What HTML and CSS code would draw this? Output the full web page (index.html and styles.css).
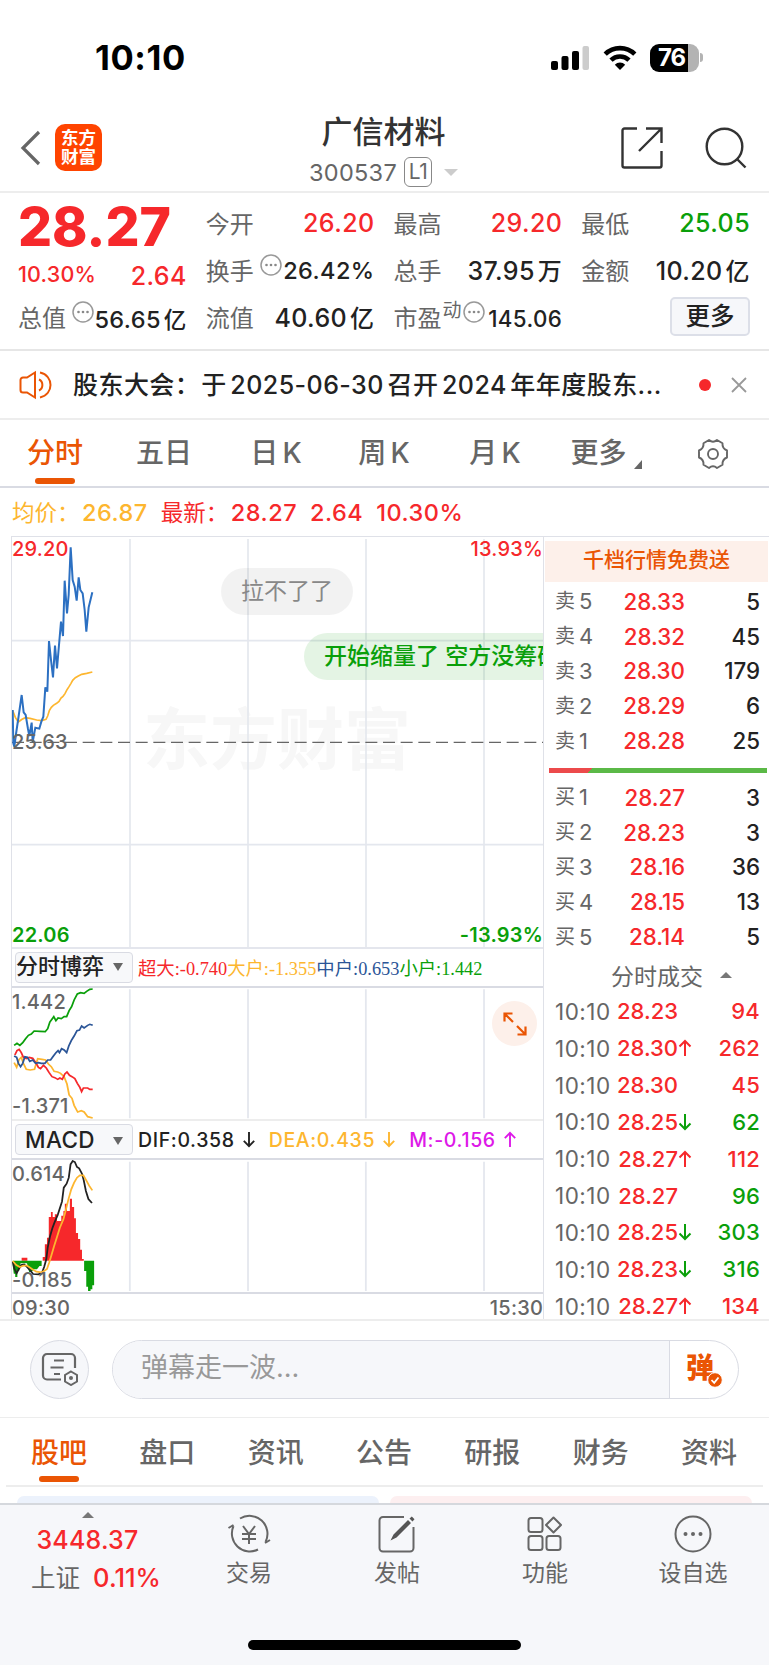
FILE: index.html
```html
<!DOCTYPE html>
<html lang="zh-CN">
<head>
    <meta charset="UTF-8">
    <meta name="viewport" content="width=device-width, initial-scale=1.0">
    <title>广信材料 300537</title>
    <link rel="stylesheet" href="styles.css">
</head>
<body>
    <svg class="defs" width="0" height="0">
        <symbol id="up" viewBox="0 0 14 18"><path d="M7 17V2M1.5 7.5L7 2l5.500 5.500" fill="none" stroke="currentColor" stroke-width="2"/></symbol>
        <symbol id="down" viewBox="0 0 14 18"><path d="M7 1v15M1.500 10.500L7 16l5.500-5.500" fill="none" stroke="currentColor" stroke-width="2"/></symbol>
        <symbol id="more" viewBox="0 0 22 22"><circle cx="11" cy="11" r="10" fill="none" stroke="#999" stroke-width="1.500"/><g fill="#888"><circle cx="6.500" cy="11" r="1.300"/><circle cx="11" cy="11" r="1.300"/><circle cx="15.500" cy="11" r="1.300"/></g></symbol>
    </svg>

    <div class="status">
        <span class="clock">10:10</span>
        <div class="status-icons">
            <svg width="40" height="26" viewBox="0 0 40 26">
                <rect x="1" y="16" width="7" height="9" rx="2"/>
                <rect x="11.500" y="11" width="7" height="14" rx="2"/>
                <rect x="22" y="6" width="7" height="19" rx="2"/>
                <rect x="32.500" y="1" width="6.500" height="24" rx="2" fill="#ccc"/>
            </svg>
            <svg width="34" height="26" viewBox="0 0 34 26">
                <g fill="none" stroke="#000" stroke-width="4.600">
                    <path d="M2.200 9.200a21 21 0 0 1 29.600 0"/>
                    <path d="M8 15.200a12.800 12.800 0 0 1 18 0"/>
                </g>
                <path d="M17 25l-5.200-5.300a7.500 7.500 0 0 1 10.400 0z"/>
            </svg>
            <div class="battery"><span>76</span></div>
        </div>
    </div>

    <div class="nav">
        <svg class="back" width="22" height="36" viewBox="0 0 22 36"><path d="M19 2L3 18l16 16" fill="none" stroke="#666" stroke-width="3.200"/></svg>
        <div class="logo">东方<br>财富</div>
        <div class="nav-title">
            <h1>广信材料</h1>
            <div class="code">300537<span class="level">L1</span><i class="tri-down light"></i></div>
        </div>
        <svg class="share" width="44" height="44" viewBox="0 0 44 44"><path d="M17 2.500H4.500a2 2 0 0 0-2 2v35a2 2 0 0 0 2 2h35a2 2 0 0 0 2-2V25M26 2.500h15.500V17M41 3L19 25" fill="none" stroke="#333" stroke-width="2.400"/></svg>
        <svg class="search" width="44" height="44" viewBox="0 0 44 44"><g fill="none" stroke="#333" stroke-width="2.400"><circle cx="20.500" cy="20.500" r="17.800"/><path d="M33 33l8.500 8.500"/></g></svg>
    </div>

    <div class="quote">
        <div class="cell price red">28.27</div>
        <div class="cell"><span>今开</span><b class="red">26.20</b></div>
        <div class="cell"><span>最高</span><b class="red">29.20</b></div>
        <div class="cell"><span>最低</span><b class="green">25.05</b></div>

        <div class="cell change red"><b class="pct">10.30%</b><b>2.64</b></div>
        <div class="cell"><span>换手</span><svg class="tip"><use href="#more"/></svg><b class="mid">26.42%</b></div>
        <div class="cell"><span>总手</span><b>37.95<em>万</em></b></div>
        <div class="cell"><span>金额</span><b>10.20<em>亿</em></b></div>

        <div class="cell"><span>总值</span><svg class="tip"><use href="#more"/></svg><b class="mid">56.65<em>亿</em></b></div>
        <div class="cell"><span>流值</span><b>40.60<em>亿</em></b></div>
        <div class="cell"><span>市盈</span><small>动</small><svg class="tip"><use href="#more"/></svg><b class="small">145.06</b></div>
        <div class="cell"><button class="more-btn">更多</button></div>
    </div>

    <div class="notice">
        <svg width="34" height="30" viewBox="0 0 34 30"><g fill="none" stroke="#ea5504" stroke-width="2"><path d="M16 2.500v25L8 22.500H4a2.500 2.500 0 0 1-2.500-2.500V10A2.500 2.500 0 0 1 4 7.500h4z"/><path d="M20 9.500c4.500 2 4.500 9 0 11M21 2.500c14 3 14 22 0 25"/></g></svg>
        <p>股东大会：<span>于</span> <b>2025-06-30</b> 召开 <b>2024</b> 年年度股东...</p>
        <i class="dot"></i>
        <svg class="close" width="16" height="16" viewBox="0 0 16 16"><path d="M1 1l14 14M15 1L1 15" stroke="#999" stroke-width="1.800"/></svg>
    </div>

    <div class="periods">
        <span class="active">分时</span>
        <span>五日</span>
        <span>日<b>K</b></span>
        <span>周<b>K</b></span>
        <span>月<b>K</b></span>
        <span class="corner">更多</span>
        <svg width="32" height="32" viewBox="0 0 32 32"><g fill="none" stroke="#666" stroke-width="1.900" stroke-linejoin="round"><path d="M12 2q4 3.500 8 0l5.500 3.200q-.5 5.300 4.500 7.300v7q-5 2-4.500 7.300L20 30q-4-3.500-8 0l-5.500-3.200Q7 21.500 2 19.500v-7q5-2 4.500-7.300z"/><circle cx="16" cy="16" r="5"/></g></svg>
    </div>

    <div class="legend">
        <span class="amber">均价：</span><b class="amber">26.87</b>
        <span class="red">最新：</span><b class="red">28.27</b><b class="red">2.64</b><b class="red">10.30%</b>
    </div>

    <div class="market">
        <div class="charts">
            <div class="chart main-chart">
                <div class="watermark">东方财富</div>
                <!-- 3 units per pixel -->
                <svg width="532" height="411" viewBox="36 21 1596 1233">
                    <path d="M390 27v1224M744 27v1224M1098 27v1224M1452 27v1224M36 332h1596M36 944h1596" stroke="#e4e7ee" stroke-width="5"/>
                    <path d="M36 637h1596" stroke="#666" stroke-width="4" stroke-dasharray="36 17"/>
                    <polyline fill="none" stroke="#fdb62f" stroke-width="5" points="38,542 46,562 55,576 66,568 76,563 90,565 110,570 125,572 138,568 143,558 148,542 154,532 160,526 170,520 177,514 183,504 189,499 195,491 201,479 207,470 213,460 218,451 226,443 235,438 245,433 260,430 277,426"/>
                    <polyline fill="none" stroke="#2c70c2" stroke-width="6" points="38,540 40,640 43,650 48,612 56,558 65,495 71,547 77,555 84,597 88,618 95,578 98,636 106,593 118,596 124,575 130,560 136,472 142,485 147,333 153,390 159,442 165,347 171,415 177,345 183,275 189,318 194,152 201,250 206,195 212,52 218,150 224,170 230,212 236,142 241,180 248,190 254,240 259,305 266,232 277,187"/>
                </svg>
                <span class="tag top left red">29.20</span>
                <span class="tag top right red">13.93%</span>
                <span class="tag middle left">25.63</span>
                <span class="tag bottom left green">22.06</span>
                <span class="tag bottom right green">-13.93%</span>
                <div class="bullet gray">拉不了了</div>
                <div class="bullet up">开始缩量了 空方没筹码</div>
            </div>

            <div class="bar">
                <div class="select">分时博弈<i class="tri-down"></i></div>
                <p class="flow"><span class="red">超大:-0.740</span><span class="amber">大户:-1.355</span><span class="blue">中户:0.653</span><span class="green">小户:1.442</span></p>
            </div>
            <div class="chart sub-chart">
                <svg width="532" height="132" viewBox="34 204 1490 396" preserveAspectRatio="none">
                    <path d="M364 208v387M695 208v387M1025 208v387M1356 208v387" stroke="#e4e7ee" stroke-width="5"/>
                    <g fill="none" stroke-width="5">
                        <polyline stroke="#fdb62f" points="40,428 47,442 54,418 60,412 66,430 74,448 85,450 97,448 106,416 118,418 128,420 136,432 144,440 152,454 162,456 170,460 180,470 188,492 194,525 202,535 208,556 218,576 228,572 236,576 246,590 260,594"/>
                        <polyline stroke="#f6282b" points="42,405 48,392 54,388 60,398 66,412 74,416 82,412 92,415 102,430 108,442 114,446 122,436 130,444 138,458 146,470 154,473 162,478 168,474 175,478 182,462 188,456 195,466 202,470 210,476 217,490 224,502 229,515 234,504 246,504 252,508 260,508"/>
                        <polyline stroke="#2b5597" points="40,408 47,412 52,430 58,440 64,430 70,410 77,412 84,424 92,420 100,430 108,428 116,430 126,430 134,420 142,420 150,408 157,398 163,392 167,398 173,386 180,390 187,398 193,378 200,362 208,348 216,332 223,330 229,318 236,324 246,316 252,313 260,316"/>
                        <polyline stroke="#0a9f0a" points="40,376 48,370 56,376 64,368 72,356 80,346 88,342 96,333 112,334 127,335 134,326 140,306 151,290 157,302 163,294 172,296 180,290 187,290 194,272 201,260 208,240 217,222 226,218 236,220 243,214 252,208 260,207"/>
                    </g>
                </svg>
                <span class="tag top left">1.442</span>
                <span class="tag bottom left">-1.371</span>
                <div class="expand"><svg width="24" height="24" viewBox="0 0 24 24"><path d="M1.500 9.500v-8h8M2 2l8 8M22.500 14.500v8h-8M22 22l-8-8" fill="none" stroke="#ea5504" stroke-width="2.200"/></svg></div>
            </div>

            <div class="bar">
                <div class="select latin">MACD<i class="tri-down"></i></div>
                <p class="macd"><span>DIF:0.358<svg><use href="#down"/></svg></span><span class="amber">DEA:0.435<svg><use href="#down"/></svg></span><span class="purple">M:-0.156<svg><use href="#up"/></svg></span></p>
            </div>
            <div class="chart macd-chart">
                <svg width="532" height="133" viewBox="34 147 1490 399" preserveAspectRatio="none">
                    <path d="M364 152v388M695 152v388M1025 152v388M1356 152v388" stroke="#e4e7ee" stroke-width="5"/>
                    <path d="M120 449V438h6V400h6V380h5V318h6V303h5V318h6V310h6V330h12V314h6V300h4V278h6V300h8V263h6V288h6V322h5V366h6V384h6V416h5V444h5V449zM61 449V440h16v9z" fill="#f6282b"/>
                    <path d="M36 449h81v16h-6l-7 10h-8l-8 8h-6l-6-26H58l-4 23h-5v18h-6v-10h-4l-3-24zM236 449h28v74h-5v12h-5v5h-7v-13h-5v-47h-6z" fill="#0a9f0a"/>
                    <polyline fill="none" stroke="#222" stroke-width="5" points="36,452 41,474 47,487 53,474 60,462 68,460 76,468 85,478 93,489 108,490 118,485 124,468 130,445 134,410 140,378 147,352 154,332 162,312 168,292 174,272 179,230 187,218 193,200 198,160 204,150 210,153 216,168 222,172 230,188 235,208 241,240 248,264 258,276"/>
                    <polyline fill="none" stroke="#fdb62f" stroke-width="5" points="36,450 46,462 56,468 66,464 76,464 90,474 102,482 116,484 124,480 132,474 138,455 144,434 152,405 160,378 168,350 178,325 184,300 192,265 200,235 208,215 216,200 224,193 234,193 242,208 250,224 259,238"/>
                </svg>
                <span class="tag top left">0.614</span>
                <span class="tag bottom left">-0.185</span>
            </div>
            <div class="times"><span>09:30</span><span>15:30</span></div>
        </div>

        <div class="book">
            <div class="promo">千档行情免费送</div>
            <div class="levels">
                <div><span>卖<i>5</i></span><b>28.33</b><b>5</b></div>
                <div><span>卖<i>4</i></span><b>28.32</b><b>45</b></div>
                <div><span>卖<i>3</i></span><b>28.30</b><b>179</b></div>
                <div><span>卖<i>2</i></span><b>28.29</b><b>6</b></div>
                <div><span>卖<i>1</i></span><b>28.28</b><b>25</b></div>
            </div>
            <div class="ratio"></div>
            <div class="levels buy">
                <div><span>买<i>1</i></span><b>28.27</b><b>3</b></div>
                <div><span>买<i>2</i></span><b>28.23</b><b>3</b></div>
                <div><span>买<i>3</i></span><b>28.16</b><b>36</b></div>
                <div><span>买<i>4</i></span><b>28.15</b><b>13</b></div>
                <div><span>买<i>5</i></span><b>28.14</b><b>5</b></div>
            </div>
            <div class="deals-title">分时成交<i class="tri-up"></i></div>
            <div class="deals">
                <div><span>10:10</span><b>28.23</b><b class="red">94</b></div>
                <div><span>10:10</span><b>28.30</b><svg class="red"><use href="#up"/></svg><b class="red">262</b></div>
                <div><span>10:10</span><b>28.30</b><b class="red">45</b></div>
                <div><span>10:10</span><b>28.25</b><svg class="green"><use href="#down"/></svg><b class="green">62</b></div>
                <div><span>10:10</span><b>28.27</b><svg class="red"><use href="#up"/></svg><b class="red">112</b></div>
                <div><span>10:10</span><b>28.27</b><b class="green">96</b></div>
                <div><span>10:10</span><b>28.25</b><svg class="green"><use href="#down"/></svg><b class="green">303</b></div>
                <div><span>10:10</span><b>28.23</b><svg class="green"><use href="#down"/></svg><b class="green">316</b></div>
                <div><span>10:10</span><b>28.27</b><svg class="red"><use href="#up"/></svg><b class="red">134</b></div>
            </div>
        </div>
    </div>

    <div class="comment">
        <div class="comment-set">
            <svg width="38" height="34" viewBox="0 0 38 34"><g fill="none" stroke="#666" stroke-width="2.200"><path d="M20 27.500H6a4 4 0 0 1-4-4V6a4 4 0 0 1 4-4h24a4 4 0 0 1 4 4v10M13 8.500h10M9.500 15.500h13M13 22h6"/><path d="M30 19.500l6 3.500v6.500l-6 3.500-6-3.500V23z" stroke-width="2"/></g><circle cx="30" cy="26" r="2" fill="#666"/></svg>
        </div>
        <div class="comment-box">
            <span class="placeholder">弹幕走一波...</span>
            <span class="danmu">弹<svg width="16" height="16" viewBox="0 0 16 16"><circle cx="8" cy="8" r="7.300" fill="#ea5504" stroke="#fff" stroke-width="1"/><path d="M4.500 8l2.700 2.800L11.500 5.500" fill="none" stroke="#fff" stroke-width="1.800"/></svg></span>
        </div>
    </div>

    <div class="sections">
        <span class="active">股吧</span><span>盘口</span><span>资讯</span><span>公告</span><span>研报</span><span>财务</span><span>资料</span>
    </div>
    <div class="cards"><i></i><i class="pink"></i></div>

    <div class="footer">
        <div class="index">
            <i class="tri-up"></i>
            <b class="red">3448.37</b>
            <p>上证<b class="red">0.11%</b></p>
        </div>
        <div class="item">
            <svg width="44" height="40" viewBox="0 0 44 40"><g fill="none" stroke="#666" stroke-width="2"><path d="M13 4.500A18 18 0 0 1 38.500 28M38 29l5-3M31 35.500A18 18 0 0 1 6.500 12M6.500 11L1.500 14"/><path d="M16 12l6 8 6-8M22 20v10M15 20h14M15 25h14"/></g></svg>
            <span>交易</span>
        </div>
        <div class="item">
            <svg width="40" height="40" viewBox="0 0 40 40"><g fill="none" stroke="#666" stroke-width="2"><path d="M27 3H6a3.500 3.500 0 0 0-3.500 3.500V34A3.500 3.500 0 0 0 6 37.500h27a3.500 3.500 0 0 0 3.500-3.500V13"/></g><path d="M13.500 26.500l3-6L31 6l3 3-14.500 14.500zM32.500 4.500l2.300-2 2.700 2.700-2 2.300z" fill="#555"/></svg>
            <span>发帖</span>
        </div>
        <div class="item">
            <svg width="40" height="40" viewBox="0 0 40 40"><g fill="none" stroke="#666" stroke-width="2"><rect x="3.500" y="4" width="14" height="14" rx="2.500"/><rect x="3.500" y="22" width="14" height="14" rx="2.500"/><rect x="21.500" y="22" width="14" height="14" rx="2.500"/><path d="M28.500 3.500l7.500 7.500-7.500 7.500L21 11z" stroke-linejoin="round"/></g></svg>
            <span>功能</span>
        </div>
        <div class="item">
            <svg width="40" height="40" viewBox="0 0 40 40"><circle cx="20" cy="20" r="17.500" fill="none" stroke="#666" stroke-width="2"/><g fill="#666"><circle cx="12.500" cy="20" r="2"/><circle cx="20" cy="20" r="2"/><circle cx="27.500" cy="20" r="2"/></g></svg>
            <span>设自选</span>
        </div>
        <div class="home"></div>
    </div>
</body>
</html>
```
FILE: styles.css
```css
* {
    box-sizing: border-box;
    margin: 0;
    padding: 0;
}
body {
    width: 769px;
    height: 1665px;
    overflow: hidden;
    background: #fff;
    color: #222;
    font-family: Inter, "Noto Sans CJK SC", sans-serif;
}
b {
    font-weight: 500;
}
i, em {
    font-style: normal;
}
.defs {
    display: block;
}
.red {
    color: #f6282b;
}
.green {
    color: #0a9f0a;
}
.amber {
    color: #fdb62f;
}
.blue {
    color: #2b5597;
}
.purple {
    color: #dd19e8;
}
.tri-down {
    display: inline-block;
    border: 5px solid transparent;
    border-top: 8px solid #666;
    border-bottom: 0;
}
.tri-down.light {
    border-width: 7px 7px 0;
    border-top-color: #ccc;
}
.tri-up {
    display: inline-block;
    border: 6px solid transparent;
    border-bottom: 6px solid #777;
    border-top: 0;
}

/* status bar */
.status {
    display: flex;
    justify-content: space-between;
    align-items: center;
    height: 115px;
    padding: 0 70px 0 95px;
}
.clock {
    font-size: 34.5px;
    font-weight: 700;
    letter-spacing: 0.6px;
    color: #000;
}
.status-icons {
    display: flex;
    align-items: center;
    gap: 13px;
}
.battery {
    position: relative;
    width: 49px;
    height: 28px;
    border-radius: 9px;
    background: linear-gradient(90deg, #000 38px, #b3b3b3 38px);
    color: #fff;
    font-size: 24px;
    font-weight: 700;
    line-height: 28px;
    letter-spacing: -1px;
    padding-left: 8px;
}
.battery::after {
    content: "";
    position: absolute;
    left: 50px;
    top: 9px;
    width: 3px;
    height: 9px;
    border-radius: 0 3px 3px 0;
    background: #b3b3b3;
}

/* nav */
.nav {
    display: flex;
    align-items: flex-start;
    height: 78px;
    padding: 9px 21px 0 20px;
    border-bottom: 2px solid #ededed;
}
.back {
    margin-top: 6px;
}
.logo {
    width: 47px;
    height: 47px;
    margin-left: 13px;
    padding-top: 4px;
    border-radius: 10px;
    background: #ff4400;
    color: #fff;
    font-size: 17.5px;
    font-weight: 700;
    line-height: 19px;
    text-align: center;
}
.nav-title {
    flex: 1;
    margin-left: 45px;
    text-align: center;
}
.nav-title h1 {
    margin-top: -11px;
    font-size: 31px;
    font-weight: 500;
    line-height: 38px;
    color: #333;
}
.code {
    display: flex;
    justify-content: center;
    align-items: center;
    height: 32px;
    margin-top: 5px;
    color: #666;
    font-size: 23.5px;
    letter-spacing: 0.3px;
}
.level {
    width: 28px;
    height: 30px;
    margin: 0 12px 0 7px;
    border: 1.5px solid #888;
    border-radius: 6px;
    font-size: 21px;
    line-height: 27px;
    letter-spacing: -0.5px;
}
.share {
    margin: 2px 40px 0 0;
}
.search {
    margin-top: 2px;
}

/* quote */
.quote {
    display: grid;
    grid-template-columns: repeat(4, 1fr);
    grid-template-rows: repeat(3, 47px);
    column-gap: 19px;
    height: 158px;
    padding: 6px 19px 0 18px;
    border-bottom: 2px solid #e6e6e6;
}
.cell {
    display: flex;
    align-items: center;
    color: #666;
    font-size: 24px;
    white-space: nowrap;
}
.cell b {
    margin-left: auto;
    color: #222;
    font-size: 25px;
    letter-spacing: 0.4px;
}
.cell > span {
    margin-top: -1px;
}
.cell b.red, .change b {
    color: #f6282b;
}
.cell b.green {
    color: #0a9f0a;
}
.cell em {
    margin-left: 3px;
    font-size: 24px;
}
.cell b.mid {
    padding-top: 2px;
    font-size: 23.5px;
}
.cell b.mid em {
    font-size: 22.5px;
}
.cell b.small {
    padding-top: 4px;
    font-size: 22.3px;
}
.cell small {
    margin: -16px 0 0 1px;
    font-size: 19px;
}
.tip {
    width: 22px;
    height: 22px;
    margin: -9px 0 0 6px;
}
small + .tip {
    margin-left: 1px;
}
.cell.price {
    padding-top: 7px;
    color: #f6282b;
    font-size: 53.5px;
    font-weight: 800;
}
.cell.change {
    padding-top: 12px;
    color: #f6282b;
}
.cell.change b {
    color: #f6282b;
}
.cell.change .pct {
    margin: -4px 0 0;
    font-size: 21.5px;
    letter-spacing: 0.2px;
}
.more-btn {
    width: 80px;
    height: 39px;
    margin-left: auto;
    border: 2px solid #dcdfe8;
    border-radius: 5px;
    background: #f6f7fa;
    color: #222;
    font: 500 24.5px/30px "Noto Sans CJK SC", sans-serif;
    padding-bottom: 4px;
}

/* notice */
.notice {
    display: flex;
    align-items: center;
    height: 69px;
    padding: 0 22px 0 19px;
    border-bottom: 2px solid #ededed;
}
.notice p {
    width: 626px;
    margin: -4px 0 0 20px;
    font-size: 25px;
    font-weight: 500;
    letter-spacing: 0.45px;
    word-spacing: -3.5px;
    white-space: nowrap;
}
.notice p span {
    margin-left: 1px;
}
.dot {
    width: 12px;
    height: 12px;
    border-radius: 50%;
    background: #f6282b;
}
.close {
    margin-left: auto;
}

/* period tabs */
.periods {
    display: grid;
    grid-template-columns: 110px 108px 116px 100px 122px 85px 144px;
    justify-items: center;
    align-items: center;
    height: 68px;
    border-bottom: 2px solid #d9dbe3;
    color: #666;
    font-size: 28px;
    font-weight: 500;
}
.periods span, .sections span {
    position: relative;
    height: 68px;
    line-height: 67px;
}
.sections span {
    line-height: 71px;
}
.periods b {
    margin-left: 4px;
}
.periods .active, .sections .active {
    color: #ea5504;
}
.active::after {
    content: "";
    position: absolute;
    left: 8px;
    bottom: 4px;
    width: 40px;
    height: 6px;
    border-radius: 3px;
    background: #ea5504;
}
.corner::after {
    content: "";
    position: absolute;
    left: 64px;
    top: 40px;
    border-left: 8px solid transparent;
    border-bottom: 9px solid #666;
}

/* legend */
.legend {
    display: flex;
    align-items: center;
    height: 48px;
    padding-left: 12px;
    font-size: 22.5px;
}
.legend span {
    width: 70px;
    margin-top: -2px;
}
.legend b {
    margin-right: 13px;
    font-size: 23.5px;
    letter-spacing: 0.5px;
}

/* charts */
.market {
    display: flex;
    height: 785px;
    border-bottom: 2px solid #ededed;
}
.charts {
    width: 533px;
    margin-left: 11px;
    border: 1px solid #dfe1e8;
    border-width: 1px 1px 0;
}
.chart {
    position: relative;
    overflow: hidden;
}
.chart > svg {
    display: block;
    position: relative;
}
.main-chart {
    height: 412px;
    border-bottom: 2px solid #e4e6ed;
}
.watermark {
    position: absolute;
    left: 131px;
    top: 155px;
    color: #f7f7f7;
    font-size: 67px;
    font-weight: 700;
    line-height: 96px;
}
.tag {
    position: absolute;
    color: #666;
    font-size: 20px;
    font-weight: 500;
    line-height: 24px;
    letter-spacing: 0.2px;
}
.tag.red {
    color: #f6282b;
}
.tag.green {
    color: #0a9f0a;
    font-weight: 600;
}
.left {
    left: 0;
}
.right {
    right: 0;
}
.top {
    top: 0;
}
.sub-chart .top, .macd-chart .top {
    top: 2px;
}
.middle {
    top: 193px;
}
.bottom {
    bottom: 0;
}
.bullet {
    position: absolute;
    height: 47px;
    padding: 0 20px;
    border-radius: 24px;
    font-size: 23px;
    line-height: 46px;
    white-space: nowrap;
}
.bullet.gray {
    left: 209px;
    top: 31px;
    background: rgba(0, 0, 0, 0.05);
    color: #888;
}
.bullet.up {
    left: 292px;
    top: 96px;
    background: rgba(10, 159, 10, 0.11);
    color: #0a9f0a;
    font-weight: 500;
}
.bar {
    display: flex;
    align-items: center;
    height: 39px;
    padding-left: 3px;
    border-bottom: 2px solid #d9dbe3;
}
.select {
    display: flex;
    align-items: center;
    justify-content: space-between;
    width: 118px;
    height: 31px;
    padding: 0 9px 3px 0;
    border: 1px solid #d9dbe3;
    border-radius: 4px;
    background: #f7f8fa;
    font-size: 22px;
    font-weight: 500;
    line-height: 28px;
}
.select i {
    margin-top: 2px;
}
.latin {
    padding: 1px 9px 0 9px;
    font-size: 22.5px;
    letter-spacing: 0.4px;
}
.flow {
    margin: -2px 0 0 5px;
    font-family: "Liberation Serif", "Noto Sans CJK SC", serif;
    font-size: 18.35px;
    white-space: nowrap;
}
.sub-chart {
    height: 133px;
    border-bottom: 2px solid #ededed;
}
.sub-chart .bottom {
    bottom: 1px;
}
.expand {
    position: absolute;
    left: 480px;
    top: 13px;
    display: flex;
    align-items: center;
    justify-content: center;
    width: 45px;
    height: 45px;
    border-radius: 50%;
    background: #fdf0ea;
}
.macd {
    display: flex;
    gap: 13px;
    margin-left: 5px;
    font-size: 19.5px;
    font-weight: 500;
    letter-spacing: 0.65px;
}
.macd span {
    display: flex;
    align-items: center;
}
.macd svg {
    width: 14px;
    height: 17px;
    margin-left: 7px;
}
.macd-chart {
    height: 134px;
    border-bottom: 2px solid #d9dbe3;
}
.times {
    display: flex;
    justify-content: space-between;
    color: #666;
    font-size: 20px;
    line-height: 28px;
    font-weight: 500;
    letter-spacing: 0.2px;
}

/* order book */
.book {
    width: 225px;
    padding-left: 1px;
    border-top: 1px solid #dfe1e8;
}
.promo {
    height: 41px;
    margin: 4px 1px 2px 0;
    background: #fdf0ea;
    color: #ea5504;
    font-size: 21px;
    font-weight: 500;
    line-height: 37px;
    text-align: center;
}
.levels div {
    display: grid;
    grid-template-columns: 50px 80px 1fr;
    align-items: center;
    height: 34.8px;
    padding: 0 9px 0 10px;
    font-size: 22.3px;
    text-align: right;
}
.levels span {
    display: flex;
    align-items: center;
    color: #666;
    font-size: 20px;
    line-height: 26px;
}
.levels i {
    margin-left: 4px;
    font-size: 22px;
}
.levels b:nth-child(2) {
    color: #f6282b;
}
.ratio {
    height: 5px;
    margin: 10px 2px 7px 4px;
    background: linear-gradient(135deg, #ec4a4b 31px, #5bb947 31px);
}
.deals-title {
    display: flex;
    align-items: center;
    height: 38px;
    margin-top: 2px;
    padding-left: 66px;
    color: #666;
    font-size: 23px;
}
.deals-title i {
    margin-left: 17px;
}
.deals div {
    display: flex;
    align-items: center;
    height: 36.85px;
    padding: 0 9px 0 10px;
    font-size: 22px;
}
.deals {
    margin-top: -1px;
}
.deals span {
    width: 58px;
    color: #666;
    font-size: 22.5px;
    letter-spacing: 0.5px;
}
.deals b:nth-child(2) {
    width: 65px;
    color: #f6282b;
    text-align: right;
}
.deals b:last-child {
    margin-left: auto;
    letter-spacing: 0.2px;
}
.deals svg {
    width: 14px;
    height: 18px;
}

/* comment */
.comment {
    display: flex;
    align-items: center;
    gap: 23px;
    height: 97px;
    padding: 0 30px 0 30px;
    border-bottom: 1px solid #ededed;
}
.comment-set {
    display: flex;
    align-items: center;
    justify-content: center;
    width: 59px;
    height: 59px;
    border: 1px solid #d9dbe3;
    border-radius: 50%;
    background: #f6f7fa;
}
.comment-box {
    display: flex;
    flex: 1;
    height: 59px;
    overflow: hidden;
    border: 1px solid #d9dbe3;
    border-radius: 30px;
}
.placeholder {
    width: 557px;
    padding-left: 28px;
    border-right: 1px solid #d9dbe3;
    background: #f6f7fa;
    color: #999;
    font-size: 27px;
    line-height: 53px;
}
.danmu {
    position: relative;
    padding-left: 16px;
    color: #ea5504;
    font-size: 28px;
    font-weight: 900;
    line-height: 55px;
}
.danmu svg {
    position: absolute;
    left: 37px;
    top: 31px;
}

/* section tabs */
.sections {
    display: flex;
    justify-content: space-between;
    height: 69px;
    margin: 0 6px;
    padding: 0 26px 0 25px;
    border-bottom: 2px solid #ededed;
    color: #666;
    font-size: 28px;
    font-weight: 500;
}
.cards {
    display: flex;
    gap: 11px;
    height: 16px;
    padding: 9px 17px 0;
}
.cards i {
    flex: 1;
    border-radius: 8px 8px 0 0;
    background: #ecf2fc;
}
.cards .pink {
    background: #fdeff0;
}

/* footer */
.footer {
    position: relative;
    display: flex;
    height: 163px;
    border-top: 2px solid #d5d8dd;
    background: #f6f7fa;
    color: #666;
}
.index {
    display: flex;
    flex-direction: column;
    align-items: center;
    width: 175px;
    padding-top: 7px;
    font-size: 24.5px;
}
.index p {
    margin: -2px 0 0 17px;
    line-height: 36px;
}
.index > b {
    font-size: 25px;
    line-height: 44px;
    letter-spacing: 0.2px;
}
.index p b {
    margin-left: 13px;
    font-size: 25.5px;
}
.item {
    display: flex;
    flex-direction: column;
    align-items: center;
    width: 148px;
    padding-top: 9px;
    font-size: 23px;
}
.item span {
    margin-top: 2px;
    line-height: 34px;
}
.home {
    position: absolute;
    left: 248px;
    bottom: 16px;
    width: 273px;
    height: 10px;
    border-radius: 5px;
    background: #000;
}
```
